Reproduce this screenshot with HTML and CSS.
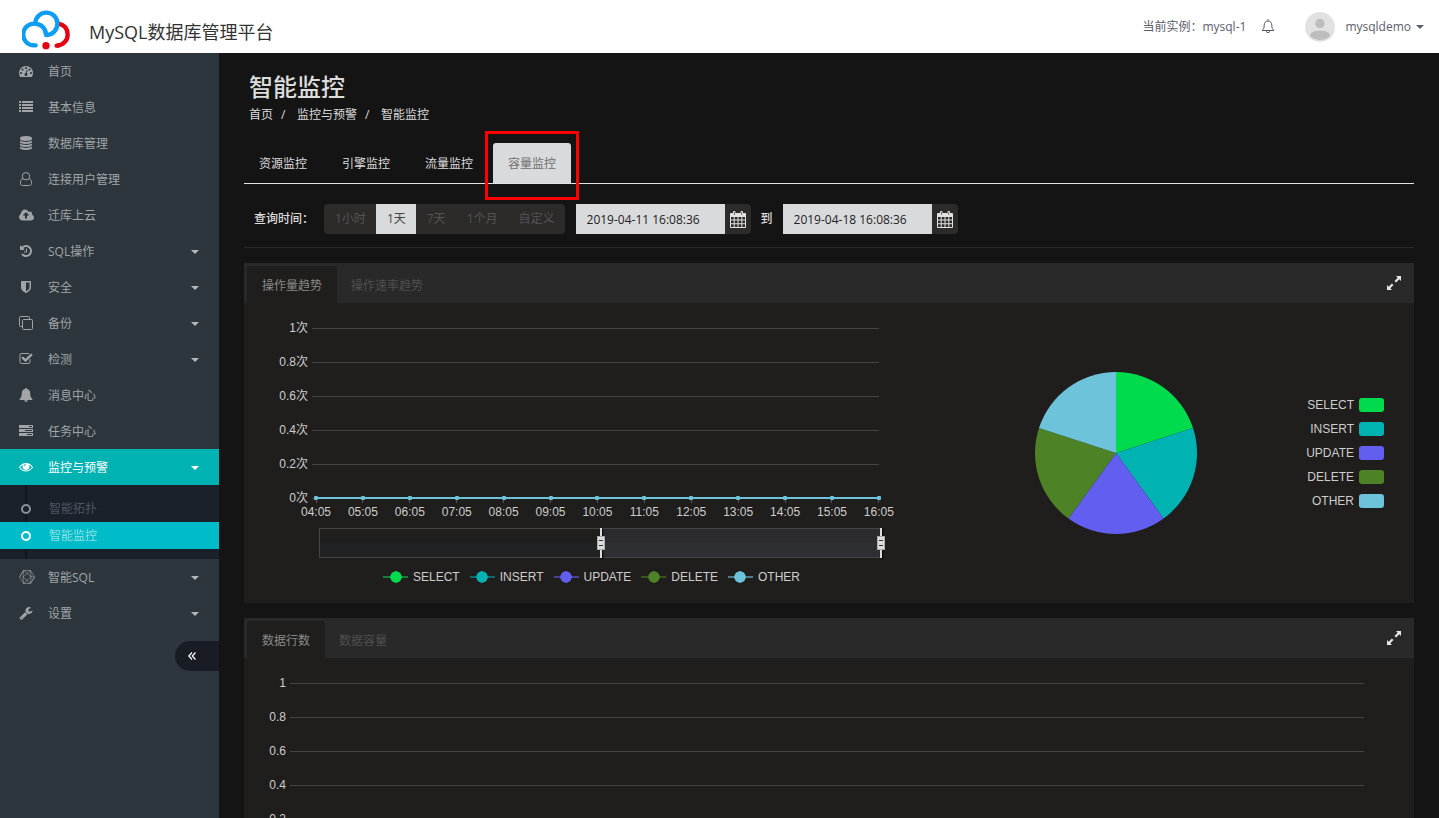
FILE: index.html
```html
<!DOCTYPE html>
<html lang="zh-CN">
<head>
<meta charset="utf-8">
<meta name="viewport" content="width=device-width, initial-scale=1">
<title>MySQL数据库管理平台</title>
<link rel="stylesheet" href="styles.css">
</head>
<body>
<div class="app">
  <header class="topbar">
    <a class="brand" href="#">
      <svg class="brand-logo" viewBox="66 30 144 120" fill="none" stroke-width="13" stroke-linecap="round" aria-hidden="true">
        <path stroke="#e60012" stroke-linecap="butt" d="M176 71c17 4 27 16 27 33 0 18-14 32-33 33"/>
        <path stroke="#e60012" d="M172 137h-2"/>
        <circle cx="138" cy="137" r="11" fill="#e60012"/>
        <path stroke="#0d9df2" d="M107 136h-5a32 32 0 0 1 0-65c22 0 36 14 36 34M106 68a33 32 0 0 1 66 4c0 19-15 33-34 33"/>
      </svg>
      <span class="brand-name">MySQL数据库管理平台</span>
    </a>
    <div class="topbar-right">
      <span class="instance">当前实例：mysql-1</span>
      <button class="bell" type="button" aria-label="通知">
        <svg viewBox="0 0 14 14" fill="none" stroke="#556" aria-hidden="true"><path d="M1 11.500c1.600-1.200 2.200-2.700 2.200-5.200C3.200 3.600 4.600 2 7 2s3.800 1.600 3.800 4.300c0 2.500.6 4 2.200 5.200z"/><path d="M5.500 12.200a1.500 1.500 0 0 0 3 0M7 .3v1.500"/></svg>
      </button>
      <button class="user" type="button">
        <svg class="avatar" viewBox="0 0 30 30" aria-hidden="true"><circle cx="15" cy="15" r="15" fill="#e1e1e1"/><circle cx="15" cy="11.500" r="4.700" fill="#bdbdbd"/><path fill="#bdbdbd" d="M5 24c0-3.500 4-5.200 10-5.200s10 1.700 10 5.200a13 11 0 0 1-20 0z"/></svg>
        <span>mysqldemo</span>
        <i class="caret"></i>
      </button>
    </div>
  </header>

  <div class="body">
    <nav class="sidebar">
      <a class="nav-item" href="#"><svg class="ico" viewBox="0 0 1792 1792"><path d="M384 1152q0-53-37.500-90.500t-90.500-37.500-90.500 37.500-37.500 90.500 37.500 90.500 90.500 37.500 90.500-37.500 37.500-90.500zm192-448q0-53-37.500-90.500t-90.500-37.500-90.500 37.500-37.500 90.500 37.500 90.500 90.500 37.500 90.500-37.500 37.500-90.500zm428 481l101-382q6-26-7.500-48.500t-38.500-29.500-48 6.500-30 39.500l-101 382q-60 5-107 43.500t-63 98.500q-20 77 20 146t117 89 146-20 89-117q16-60-6-117t-72-91zm660-33q0-53-37.500-90.500t-90.500-37.500-90.500 37.500-37.500 90.500 37.500 90.500 90.500 37.500 90.500-37.500 37.500-90.500zm-640-640q0-53-37.500-90.500t-90.500-37.500-90.500 37.500-37.500 90.500 37.500 90.500 90.500 37.500 90.500-37.500 37.500-90.500zm448 192q0-53-37.500-90.500t-90.500-37.500-90.500 37.500-37.500 90.500 37.500 90.500 90.500 37.500 90.500-37.500 37.500-90.500zm320 448q0 261-141 483-19 29-54 29h-1402q-35 0-54-29-141-221-141-483 0-182 71-348t191-286 286-191 348-71 348 71 286 191 191 286 71 348z"/></svg>首页</a>
      <a class="nav-item" href="#"><svg class="ico" viewBox="0 0 14 14"><path d="M0 1h2v2H0zM3 1h11v2H3zM0 4h2v2H0zM3 4h11v2H3zM0 7h2v2H0zM3 7h11v2H3zM0 10h2v2H0zM3 10h11v2H3z"/></svg>基本信息</a>
      <a class="nav-item" href="#"><svg class="ico" viewBox="0 0 14 14"><path d="M1 2.200C1 .900 3.500 0 7 0s6 .9 6 2.200v.8c0 1.200-2.500 2-6 2s-6-.8-6-2zM1 4.500c1.300 1 3.500 1.400 6 1.400s4.700-.4 6-1.400V6c0 1.200-2.500 2-6 2s-6-.8-6-2zM1 7.500c1.300 1 3.500 1.400 6 1.400s4.700-.4 6-1.400V9c0 1.200-2.500 2-6 2s-6-.8-6-2zM1 10.500c1.300 1 3.500 1.400 6 1.400s4.700-.4 6-1.400V12c0 1.200-2.500 2-6 2s-6-.8-6-2z"/></svg>数据库管理</a>
      <a class="nav-item" href="#"><svg class="ico line" viewBox="0 0 14 14"><path d="M4 6.500C1.800 7 1.300 9.300 1.500 11.500c.1 1.200.9 2 2 2h7c1.100 0 1.900-.8 2-2 .2-2.200-.3-4.500-2.500-5"/><circle cx="7" cy="4.200" r="3.700"/></svg>连接用户管理</a>
      <a class="nav-item" href="#"><svg class="ico wide" viewBox="0 0 2048 1792"><path d="M1280 928q0-14-9-23l-352-352q-9-9-23-9t-23 9l-351 351q-10 12-10 24 0 14 9 23t23 9h224v352q0 13 9.500 22.500t22.500 9.500h192q13 0 22.500-9.500t9.500-22.500v-352h224q13 0 22.500-9.500t9.500-22.500zm640 288q0 159-112.500 271.500t-271.500 112.500h-1088q-185 0-316.500-131.500t-131.500-316.500q0-130 70-240t188-165q-2-30-2-43 0-212 150-362t362-150q156 0 285.500 87t188.500 231q71-62 166-62 106 0 181 75t75 181q0 76-41 138 130 31 213.500 135.500t83.500 238.500z"/></svg>迁库上云</a>
      <a class="nav-item" href="#"><svg class="ico" viewBox="0 0 1792 1792"><path d="M1664 896q0 156-61 298t-164 245-245 164-298 61q-172 0-327-72.500t-264-204.500q-7-10-6.500-22.500t8.500-20.500l137-138q10-9 25-9 16 2 23 12 73 95 179 147t225 52q104 0 198.500-40.500t163.500-109.500 109.500-163.500 40.500-198.500-40.500-198.500-109.500-163.500-163.500-109.500-198.500-40.500q-98 0-188 35.500t-160 101.500l137 138q31 30 14 69-17 40-59 40h-448q-26 0-45-19t-19-45v-448q0-42 40-59 39-17 69 14l130 129q107-101 244.500-156.500t284.500-55.500q156 0 298 61t245 164 164 245 61 298zm-640-288v448q0 14-9 23t-23 9h-320q-14 0-23-9t-9-23v-64q0-14 9-23t23-9h224v-352q0-14 9-23t23-9h64q14 0 23 9t9 23z"/></svg>SQL操作<i class="caret"></i></a>
      <a class="nav-item" href="#"><svg class="ico" viewBox="0 0 1792 1792"><path d="M1344 960v-640h-448v1137q119-63 213-137 235-184 235-360zm192-768v768q0 86-33.500 170.500t-83 150-118 127.500-126.500 103-121 77.500-89.500 49.500-42.500 20q-12 6-26 6t-26-6q-16-7-42.500-20t-89.500-49.500-121-77.500-126.500-103-118-127.500-83-150-33.500-170.500v-768q0-26 19-45t45-19h1152q26 0 45 19t19 45z"/></svg>安全<i class="caret"></i></a>
      <a class="nav-item" href="#"><svg class="ico line" viewBox="0 0 14 14"><path d="M3 10.500H1.500a1 1 0 0 1-1-1v-8a1 1 0 0 1 1-1h8a1 1 0 0 1 1 1V3"/><rect x="3.500" y="3.500" width="10" height="10" rx="1"/></svg>备份<i class="caret"></i></a>
      <a class="nav-item" href="#"><svg class="ico" viewBox="0 0 1792 1792"><path d="M1472 930v318q0 119-84.500 203.500t-203.500 84.500h-832q-119 0-203.500-84.500t-84.500-203.500v-832q0-119 84.500-203.500t203.500-84.500h832q63 0 117 25 15 7 18 23 3 17-9 29l-49 49q-10 10-23 10-3 0-9-2-23-6-45-6h-832q-66 0-113 47t-47 113v832q0 66 47 113t113 47h832q66 0 113-47t47-113v-254q0-13 9-22l64-64q10-10 23-10 6 0 12 3 20 8 20 29zm231-489l-814 814q-24 24-57 24t-57-24l-430-430q-24-24-24-57t24-57l110-110q24-24 57-24t57 24l263 263 647-647q24-24 57-24t57 24l110 110q24 24 24 57t-24 57z"/></svg>检测<i class="caret"></i></a>
      <a class="nav-item" href="#"><svg class="ico" viewBox="0 0 14 14"><path d="M7 0c.6 0 1 .4 1 1 2 .4 3.200 2 3.200 4 0 3 .6 4.600 2.300 6 0 .6-.4 1-1 1h-11c-.6 0-1-.4-1-1 1.700-1.400 2.300-3 2.300-6 0-2 1.200-3.600 3.200-4 0-.6.400-1 1-1zM5.200 12.300h3.600a1.800 1.700 0 0 1-3.600 0z"/></svg>消息中心</a>
      <a class="nav-item" href="#"><svg class="ico" viewBox="0 0 14 14"><path fill-rule="evenodd" d="M0 1h14v3H0zM10 2v1h3V2zM0 5h14v3H0zM6 6v1h7V6zM0 9h14v3H0zM8 10v1h5v-1z"/></svg>任务中心</a>
      <a class="nav-item active" href="#" aria-expanded="true"><svg class="ico" viewBox="0 0 14 14"><path fill-rule="evenodd" d="M0 7.200C1.500 4.600 4.100 3 7 3s5.500 1.600 7 4.200c-1.500 2.600-4.100 4.200-7 4.200S1.500 9.800 0 7.200zm1.100 0C2.400 9.200 4.500 10.400 7 10.400s4.600-1.200 5.900-3.200c-.7-1.100-1.600-1.900-2.700-2.500a3.600 3.600 0 1 1-6.400 0c-1.100.6-2 1.400-2.700 2.500zM7 4.100c-1.300 0-2.200.9-2.200 2.200h.7C5.500 5.400 6.100 4.800 7 4.800z"/></svg>监控与预警<i class="caret"></i></a>
      <div class="subnav">
        <a class="sub-item" href="#">智能拓扑</a>
        <a class="sub-item current" href="#" aria-current="page">智能监控</a>
      </div>
      <a class="nav-item" href="#"><svg class="ico wide thin" viewBox="0 0 16 14"><path d="M4.500.5h7L15.500 7l-4 6.500h-7L.5 7zM4.500.5 12 6.500l-.5 7M11.500.5 4 7l.5 6.500M.5 7 4.500.500 4 7l7.500 6.500L15.500 7 12 6.500 11.500.5M4.500 13.500 12 6.500"/></svg>智能SQL<i class="caret"></i></a>
      <a class="nav-item" href="#"><svg class="ico" viewBox="0 0 1792 1792"><path d="M448 1472q0-26-19-45t-45-19-45 19-19 45 19 45 45 19 45-19 19-45zm644-420l-682 682q-37 37-90 37-52 0-91-37l-106-108q-38-36-38-90 0-53 38-91l681-681q39 98 114.500 173.500t173.500 114.500zm634-435q0 39-23 106-47 134-164.500 217.500t-258.500 83.500q-185 0-316.500-131.500t-131.500-316.500 131.500-316.500 316.500-131.500q58 0 121.500 16.500t107.500 46.500q16 11 16 28t-16 28l-293 169v224l193 107q5-3 79-48.500t135.500-81 70.500-35.500q15 0 23.500 10t8.500 25z"/></svg>设置<i class="caret"></i></a>
      <button class="collapse" type="button" aria-label="收起菜单"><svg viewBox="0 0 8 8" aria-hidden="true"><path d="M4 .5.800 4 4 7.500M7.500.5 4.300 4l3.200 3.500"/></svg></button>
    </nav>

    <main class="main">
      <div class="page-head">
        <h1>智能监控</h1>
        <nav class="crumbs"><a href="#">首页</a><span>/</span><a href="#">监控与预警</a><span>/</span><a href="#">智能监控</a></nav>
      </div>

      <nav class="tabs">
        <a href="#">资源监控</a>
        <a href="#">引擎监控</a>
        <a href="#">流量监控</a>
        <a class="active marked" href="#">容量监控</a>
      </nav>

      <form class="query">
        <span class="query-label">查询时间：</span>
        <div class="ranges">
          <button type="button">1小时</button><button class="active" type="button">1天</button><button type="button">7天</button><button type="button">1个月</button><button type="button">自定义</button>
        </div>
        <div class="date">
          <input type="text" value="2019-04-11 16:08:36" aria-label="开始时间">
          <button type="button" aria-label="选择开始时间"><svg viewBox="0 0 16 17" aria-hidden="true"><path fill-rule="evenodd" d="M3 2V1a1 1 0 0 1 1-1h.5a1 1 0 0 1 1 1v1h5V1a1 1 0 0 1 1-1h.5a1 1 0 0 1 1 1v1H15a1 1 0 0 1 1 1v13a1 1 0 0 1-1 1H1a1 1 0 0 1-1-1V3a1 1 0 0 1 1-1zM1 6v2.600h2.700V6zm3.700 0v2.600h2.800V6zm3.800 0v2.600h2.800V6zm3.800 0v2.600H15V6zM1 9.600v2.600h2.700V9.600zm3.700 0v2.600h2.800V9.600zm3.800 0v2.600h2.800V9.600zm3.800 0v2.600H15V9.600zM1 13.200V16h2.700v-2.800zm3.700 0V16h2.800v-2.800zm3.800 0V16h2.800v-2.800zm3.800 0V16H15v-2.800zM4 1v3h.6V1zm7.500 0v3h.6V1z"/></svg></button>
        </div>
        <span class="to">到</span>
        <div class="date">
          <input type="text" value="2019-04-18 16:08:36" aria-label="结束时间">
          <button type="button" aria-label="选择结束时间"><svg viewBox="0 0 16 17" aria-hidden="true"><path fill-rule="evenodd" d="M3 2V1a1 1 0 0 1 1-1h.5a1 1 0 0 1 1 1v1h5V1a1 1 0 0 1 1-1h.5a1 1 0 0 1 1 1v1H15a1 1 0 0 1 1 1v13a1 1 0 0 1-1 1H1a1 1 0 0 1-1-1V3a1 1 0 0 1 1-1zM1 6v2.600h2.700V6zm3.700 0v2.600h2.800V6zm3.800 0v2.600h2.800V6zm3.800 0v2.600H15V6zM1 9.600v2.600h2.700V9.600zm3.700 0v2.600h2.800V9.600zm3.800 0v2.600h2.800V9.600zm3.800 0v2.600H15V9.600zM1 13.200V16h2.700v-2.800zm3.700 0V16h2.800v-2.800zm3.800 0V16h2.800v-2.800zm3.800 0V16H15v-2.800zM4 1v3h.6V1zm7.500 0v3h.6V1z"/></svg></button>
        </div>
      </form>

      <section class="panel">
        <header class="panel-head">
          <button class="panel-tab active" type="button">操作量趋势</button>
          <button class="panel-tab" type="button">操作速率趋势</button>
          <button class="expand" type="button" aria-label="全屏"><svg viewBox="0 0 14 14" aria-hidden="true"><path d="M9 0h5v5l-1.700-1.700-3.200 3.200-1.600-1.600 3.200-3.200zM5 14H0V9l1.700 1.700 3.200-3.200 1.600 1.600-3.200 3.200z"/></svg></button>
        </header>
        <div class="panel-body split">
          <div class="trend">
            <div class="grid-rows">
              <div class="grid-row"><span>1次</span></div>
              <div class="grid-row"><span>0.8次</span></div>
              <div class="grid-row"><span>0.6次</span></div>
              <div class="grid-row"><span>0.4次</span></div>
              <div class="grid-row"><span>0.2次</span></div>
              <div class="grid-row"><span>0次</span></div>
            </div>
            <div class="axis">
              <div class="point"><span>04:05</span></div>
              <div class="point"><span>05:05</span></div>
              <div class="point"><span>06:05</span></div>
              <div class="point"><span>07:05</span></div>
              <div class="point"><span>08:05</span></div>
              <div class="point"><span>09:05</span></div>
              <div class="point"><span>10:05</span></div>
              <div class="point"><span>11:05</span></div>
              <div class="point"><span>12:05</span></div>
              <div class="point"><span>13:05</span></div>
              <div class="point"><span>14:05</span></div>
              <div class="point"><span>15:05</span></div>
              <div class="point"><span>16:05</span></div>
            </div>
            <div class="zoombar">
              <div class="zoom-window">
                <i class="handle start"></i>
                <i class="handle end"></i>
              </div>
            </div>
            <ul class="legend">
              <li class="select">SELECT</li>
              <li class="insert">INSERT</li>
              <li class="update">UPDATE</li>
              <li class="delete">DELETE</li>
              <li class="other">OTHER</li>
            </ul>
          </div>
          <div class="share">
            <svg class="pie" viewBox="-81 -81 162 162" role="img" aria-label="操作量占比">
              <path fill="#00db4d" d="M0 0V-81A81 81 0 0 1 77.040-25.030z"/>
              <path fill="#00b2b2" d="M0 0 77.040-25.030A81 81 0 0 1 47.610 65.530z"/>
              <path fill="#625eef" d="M0 0 47.610 65.530A81 81 0 0 1-47.610 65.530z"/>
              <path fill="#4e8227" d="M0 0-47.610 65.530A81 81 0 0 1-77.040-25.030z"/>
              <path fill="#6dc3d9" d="M0 0-77.040-25.030A81 81 0 0 1 0-81z"/>
            </svg>
            <ul class="pie-legend">
              <li class="select">SELECT</li>
              <li class="insert">INSERT</li>
              <li class="update">UPDATE</li>
              <li class="delete">DELETE</li>
              <li class="other">OTHER</li>
            </ul>
          </div>
        </div>
      </section>

      <section class="panel">
        <header class="panel-head">
          <button class="panel-tab active" type="button">数据行数</button>
          <button class="panel-tab" type="button">数据容量</button>
          <button class="expand" type="button" aria-label="全屏"><svg viewBox="0 0 14 14" aria-hidden="true"><path d="M9 0h5v5l-1.700-1.700-3.200 3.200-1.600-1.600 3.200-3.200zM5 14H0V9l1.700 1.700 3.200-3.200 1.600 1.600-3.200 3.200z"/></svg></button>
        </header>
        <div class="panel-body">
          <div class="grid-rows narrow">
            <div class="grid-row"><span>1</span></div>
            <div class="grid-row"><span>0.8</span></div>
            <div class="grid-row"><span>0.6</span></div>
            <div class="grid-row"><span>0.4</span></div>
            <div class="grid-row"><span>0.2</span></div>
            <div class="grid-row"><span>0</span></div>
          </div>
        </div>
      </section>
    </main>
  </div>
</div>
</body>
</html>
```
FILE: styles.css
```css
*, ::before, ::after { box-sizing: border-box; }

body {
  margin: 0;
  background: #141414;
  color: #dcdcdc;
  font: 12px/18px "Open Sans", "Noto Sans CJK SC", sans-serif;
}

a { color: inherit; text-decoration: none; }
button { border: 0; padding: 0; background: none; color: inherit; font: inherit; cursor: pointer; }
ul { margin: 0; padding: 0; list-style: none; }

.app { display: flex; flex-direction: column; height: 100vh; overflow: hidden; }
.body { display: flex; flex: 1; min-height: 0; }

.caret {
  border: 4px solid transparent;
  border-top-color: currentColor;
  border-bottom: 0;
}

/* top bar */
.topbar {
  display: flex;
  flex: none;
  align-items: center;
  justify-content: space-between;
  height: 53px;
  padding: 0 15px 0 22px;
  background: #fff;
}
.brand { display: flex; align-items: center; gap: 19px; padding-top: 7px; }
.brand-logo { width: 48px; height: 40px; }
.brand-name { padding-top: 4px; color: #333; font-size: 18px; line-height: 24px; }
.topbar-right { display: flex; align-items: center; color: #5d5d6b; }
.bell { display: flex; margin: 0 30px 2px 15px; }
.bell svg { width: 14px; height: 14px; }
.user { display: flex; align-items: center; }
.avatar { width: 30px; height: 30px; margin-right: 10px; }
.user .caret { margin-left: 5px; }

/* side bar */
.sidebar {
  display: flex;
  flex: none;
  flex-direction: column;
  width: 219px;
  background: #2c363c;
  color: #a1a5a8;
}
.nav-item { display: flex; align-items: center; height: 36px; padding: 2px 20px 0 19px; }
.nav-item .caret { margin-left: auto; color: #b4b8ba; }
.nav-item.active { background: #00b2b2; color: #fff; }
.nav-item.active .caret { color: #fff; }
.ico { width: 14px; height: 14px; margin: 0 15px 2px 0; fill: currentColor; }
.ico.wide { width: 16px; margin-right: 13px; }
.ico.line, .ico.thin { fill: none; stroke: currentColor; }
.ico.thin { stroke-width: .6; }

.subnav {
  padding: 10px 0;
  background: linear-gradient(#10161d, #10161d) 25px 0 / 2px 100% no-repeat #1a212b;
  color: #4f5660;
}
.sub-item { display: flex; align-items: center; height: 27px; padding-left: 21px; }
.sub-item::before {
  content: "";
  width: 10px;
  height: 10px;
  margin-right: 18px;
  border: 2px solid #8b9095;
  border-radius: 50%;
  background: #1a212b;
}
.sub-item.current { background: #00bcc8; color: #8ae2e6; }
.sub-item.current::before { border-color: #fff; background: #00bcc8; }

.collapse {
  display: flex;
  align-items: center;
  align-self: flex-end;
  width: 44px;
  height: 30px;
  margin-top: 10px;
  padding-left: 13px;
  border-radius: 15px 0 0 15px;
  background: #1a1c25;
}
.collapse svg { width: 8px; height: 8px; fill: none; stroke: #fff; stroke-width: 1.2; }

/* content */
.main { flex: 1; min-width: 0; padding: 20px 25px 0; overflow: hidden; }
.page-head { padding-left: 5px; }
h1 { margin: 0; font-size: 24px; font-weight: 500; line-height: 28px; }
.crumbs { display: flex; margin-top: 5px; }
.crumbs span { width: 24px; padding-left: 8px; }

.tabs { display: flex; gap: 5px; margin-top: 19px; border-bottom: 1px solid #e4e4e6; }
.tabs a { position: relative; padding: 12px 15px 10px; border-radius: 3px 3px 0 0; }
.tabs .active { background: #d9dadc; color: #6e6e6e; }
.marked::after {
  content: "";
  position: absolute;
  inset: -12px -8px -17px;
  border: 3px solid #f00;
}

.query {
  display: flex;
  align-items: center;
  padding: 20px 10px 13px;
  border-bottom: 1px solid #292929;
}
.query-label { width: 70px; font-weight: 500; }
.ranges { display: flex; border-radius: 4px; overflow: hidden; background: #2c2b2a; color: #535353; }
.ranges button { height: 30px; padding: 0 10px 0 11px; }
.ranges .active { background: #d9dadc; color: #444; }
.date { display: flex; margin-left: 11px; }
.date input {
  width: 149px;
  height: 30px;
  padding: 0 11px;
  border: 0;
  border-radius: 0;
  background: #d9dadc;
  color: #222;
  font: inherit;
}
.date button {
  display: flex;
  align-items: center;
  justify-content: center;
  width: 26px;
  height: 30px;
  border-radius: 0 4px 4px 0;
  background: #2c2b2a;
}
.date svg { width: 16px; height: 17px; fill: #e2e2e2; }
.to { margin-left: 10px; font-weight: 500; }
.to + .date { margin-left: 10px; }

/* panels */
.panel { margin-top: 15px; background: #1f1e1c; }
.panel-head { display: flex; height: 40px; padding: 3px 13px 0 3px; background: #292929; }
.panel-tab { padding: 3px 14px 0; color: #505050; }
.panel-tab.active { padding: 3px 15px 0; border-radius: 3px 3px 0 0; background: #1f1e1c; color: #8a8a8a; }
.expand { display: flex; align-items: center; margin-left: auto; padding-bottom: 3px; }
.expand svg { width: 14px; height: 14px; fill: #e6e6e6; }
.panel-body { padding-top: 8px; color: #cdcdcd; font: 12px/18px "Liberation Sans", "Noto Sans CJK SC", sans-serif; }
.split { display: grid; grid-template-columns: 3fr 2fr; }

.grid-rows { padding-right: 67px; }
.grid-row { display: flex; align-items: center; height: 34px; }
.grid-row span { width: 64px; margin-right: 4px; text-align: right; }
.grid-row::after { content: ""; flex: 1; height: 1px; background: #444; }
.narrow { padding-right: 50px; }
.narrow .grid-row span { width: 42px; }

.axis {
  position: relative;
  display: flex;
  justify-content: space-between;
  margin: -19px 67px 0 72px;
}
.axis::before {
  content: "";
  position: absolute;
  inset: 1px 0 auto;
  height: 2px;
  background: #6dc3d9;
}
.point { display: flex; flex-direction: column; align-items: center; width: 0; }
.point::before { content: ""; z-index: 1; width: 4px; height: 4px; border-radius: 1px; background: #6dc3d9; }
.point::after { content: ""; order: 1; width: 1px; height: 3px; background: #555; }
.point span { order: 2; }

.zoombar {
  height: 30px;
  margin: 7px 64px 0 75px;
  border: 1px solid #444;
  background: linear-gradient(#1f1e1c 50%, #212224 50%);
}
.zoom-window { position: relative; width: 50%; height: 100%; margin-left: auto; background: linear-gradient(#2c2c2e 50%, #2d2f33 50%); }
.handle { position: absolute; top: -1px; width: 2px; height: 30px; background: #dcdcdc; box-shadow: 1px 1px 2px #000; }
.handle.start { left: -1px; }
.handle.end { right: -1px; }
.handle::after {
  content: "";
  position: absolute;
  top: 8px;
  left: -3px;
  width: 8px;
  height: 14px;
  border: 1px solid #aaa;
  background: linear-gradient(#333, #333) 1px 3px / 4px 1px no-repeat, linear-gradient(#333, #333) 1px 8px / 4px 1px no-repeat, #dcdcdc;
}

.legend { display: flex; justify-content: center; gap: 10px; margin-top: 10px; padding-right: 7px; }
.legend li { display: flex; align-items: center; }
.legend li::before {
  content: "";
  width: 25px;
  height: 12px;
  margin-right: 5px;
  background:
    radial-gradient(circle closest-side, var(--c) 90%, transparent) center / 12px 12px no-repeat,
    linear-gradient(var(--l), var(--l)) center / 25px 2px no-repeat;
}
.select { --c: #00db4d; --l: #10803a; }
.insert { --c: #00b2b2; --l: #0f6b6a; }
.update { --c: #625eef; --l: #444291; }
.delete { --c: #4e8227; --l: #385420; }
.other { --c: #6dc3d9; --l: #4a7d8b; }

.share {
  display: flex;
  align-items: center;
  justify-content: space-between;
  height: 292px;
  padding: 0 30px 8px 89px;
}
.pie { width: 162px; height: 162px; }
.pie-legend { display: grid; gap: 6px; }
.pie-legend li { display: flex; align-items: center; justify-content: flex-end; }
.pie-legend li::after { content: ""; width: 25px; height: 14px; margin-left: 5px; border-radius: 3px; background: var(--c); }
```
